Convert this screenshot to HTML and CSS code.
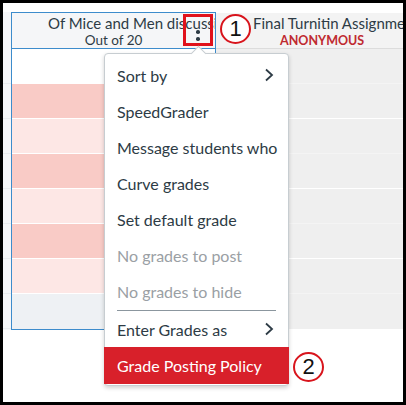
FILE: index.html
```html
<!DOCTYPE html>
<html lang="en">
<head>
<meta charset="utf-8">
<title>Gradebook column menu</title>
<link rel="stylesheet" href="styles.css">
</head>
<body>
<div class="frame">
  <div class="grid">
    <div class="stub">
      <div class="stub-head"></div>
      <div class="stub-row"></div><div class="stub-row"></div><div class="stub-row"></div><div class="stub-row"></div>
      <div class="stub-row"></div><div class="stub-row"></div><div class="stub-row"></div><div class="stub-row"></div>
    </div>
    <div class="col-active">
      <div class="head">
        <div class="title">Of Mice and Men discussion</div>
        <div class="sub">Out of 20</div>
      </div>
      <div class="row blank"></div>
      <div class="row pink"></div>
      <div class="row pale"></div>
      <div class="row pink"></div>
      <div class="row pale"></div>
      <div class="row pink"></div>
      <div class="row pale"></div>
      <div class="row grey"></div>
    </div>
    <div class="col-next">
      <div class="head next-head">
        <div class="title next-title">Final Turnitin Assignment</div>
        <div class="anon">ANONYMOUS</div>
      </div>
      <div class="nrow"></div>
      <div class="nrow strong"></div>
      <div class="nrow"></div>
      <div class="nrow strong"></div>
      <div class="nrow"></div>
      <div class="nrow strong"></div>
      <div class="nrow"></div>
      <div class="nrow last"></div>
    </div>
  </div>

  <div class="kebab"><span class="dot"></span><span class="dot"></span></div>
  <div class="badge badge-1">1</div>

  <div class="menu">
    <div class="item">Sort by<svg class="chev" width="10" height="14" viewBox="0 0 10 14"><polyline points="2,1.5 8,7 2,12.5" fill="none" stroke="#2d3b45" stroke-width="1.8"/></svg></div>
    <div class="item">SpeedGrader</div>
    <div class="item">Message students who</div>
    <div class="item">Curve grades</div>
    <div class="item">Set default grade</div>
    <div class="item disabled">No grades to post</div>
    <div class="item disabled">No grades to hide</div>
    <div class="sep"></div>
    <div class="item">Enter Grades as<svg class="chev" width="10" height="14" viewBox="0 0 10 14"><polyline points="2,1.5 8,7 2,12.5" fill="none" stroke="#2d3b45" stroke-width="1.8"/></svg></div>
    <div class="item active">Grade Posting Policy</div>
  </div>
  <div class="badge badge-2">2</div>
</div>
</body>
</html>
```

FILE: styles.css
```css
* { box-sizing: border-box; }
html, body { margin: 0; padding: 0; background: #fff; }
body { font-family: Lato, "Open Sans", sans-serif; color: #2d3b45; }

.frame {
  width: 406px;
  height: 405px;
  border: 3px solid #000;
  background: #fff;
  position: relative;
  overflow: hidden;
}

.grid {
  display: flex;
  margin-top: 9px;
}

.stub { width: 8px; background: #f6f7f9; }
.stub-head { height: 37px; }
.stub-row { height: 35px; border-bottom: 1px solid #e9ecef; }

.col-active {
  width: 205px;
  border: 1px solid #3d8ccc;
  overflow: hidden;
}

.head {
  height: 36px;
  background: #f5f6f8;
  border-bottom: 1px solid #3d8ccc;
  display: flex;
  flex-direction: column;
  padding-top: 2px;
}

.title {
  font-size: 15px;
  line-height: 17px;
  white-space: nowrap;
  padding-left: 36px;
  color: #2d3b45;
}
.sub {
  font-size: 13.5px;
  line-height: 17px;
  text-align: center;
  color: #2d3b45;
}

.row { height: 35px; border-bottom: 1px solid #fff; }
.row.blank { background: #fff; }
.row.pink { background: #f9cbc6; }
.row.pale { background: #fde7e5; }
.row.grey { background: #eef1f4; border-bottom: none; }

.col-next { flex: 1; overflow: hidden; margin-top: 1px; }
.next-head {
  height: 36px;
  background: #f3f3f3;
  border-bottom: 1px solid #dcdcdc;
}
.next-title { padding-left: 37px; }
.anon {
  font-size: 12.5px;
  font-weight: 700;
  line-height: 17px;
  color: #bf2a30;
  padding-left: 64px;
}
.nrow { height: 35px; background: #efefef; border-bottom: 1px solid #f4f4f4; }
.nrow.strong { border-bottom: 1px solid #fff; }
.nrow.last { border-bottom: none; }

.kebab {
  position: absolute;
  left: 180px;
  top: 11px;
  width: 30px;
  height: 32px;
  border: 3px solid #e0121c;
}
.dot {
  position: absolute;
  left: 10px;
  width: 3.5px;
  height: 3.5px;
  border-radius: 50%;
  background: #2d3b45;
}
.dot:first-child { top: 13px; }
.dot:last-child { top: 20px; }

.badge {
  position: absolute;
  width: 31px;
  height: 30px;
  border: 2.5px solid #d8141c;
  border-radius: 50%;
  background: #fff;
  color: #111;
  font-family: "Liberation Sans", Arial, sans-serif;
  font-size: 22px;
  line-height: 25px;
  text-align: center;
}
.badge-1 { left: 217px; top: 11px; }
.badge-2 { left: 290px; top: 349px; }

.menu {
  position: absolute;
  left: 101px;
  top: 50px;
  width: 185px;
  height: 333px;
  background: #fff;
  border: 1px solid #c7cdd1;
  border-radius: 4px;
  box-shadow: 0 2px 4px rgba(0,0,0,0.18);
  padding-top: 3px;
}
.menu::before {
  content: "";
  position: absolute;
  left: 88px;
  top: -6px;
  width: 10px;
  height: 10px;
  background: #fff;
  border-left: 1px solid #c7cdd1;
  border-top: 1px solid #c7cdd1;
  transform: rotate(45deg);
}

.item {
  height: 36px;
  display: flex;
  align-items: center;
  justify-content: space-between;
  padding: 0 14px 0 12px;
  font-size: 16px;
  color: #2d3b45;
  white-space: nowrap;
  position: relative;
}
.item.disabled { color: #9aa0a4; }
.item.active {
  background: #d8202a;
  color: #fff;
  height: 37px;
  margin: 0 -1px;
  padding-left: 13px;
}
.chev { flex: none; }
.sep {
  height: 1px;
  background: #8b969e;
  margin: 1px 12px 0 12px;
}
```
